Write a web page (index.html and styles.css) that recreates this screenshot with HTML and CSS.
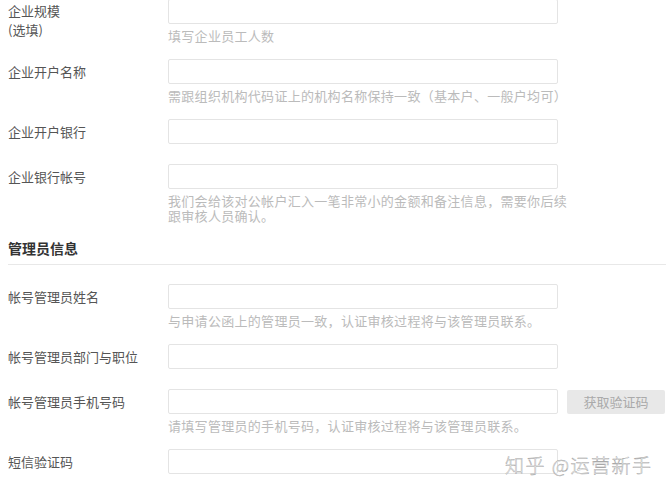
FILE: index.html
```html
<!DOCTYPE html>
<html lang="zh-CN">
<head>
  <meta charset="UTF-8">
  <meta name="viewport" content="width=device-width, initial-scale=1.0">
  <title>企业认证</title>
  <link rel="stylesheet" href="styles.css">
</head>
<body>
  <form class="form">
    <div class="row">
      <label class="label label-tall">企业规模<br>(选填)</label>
      <div class="field">
        <input class="input" type="text">
        <p class="hint">填写企业员工人数</p>
      </div>
    </div>

    <div class="row">
      <label class="label">企业开户名称</label>
      <div class="field">
        <input class="input" type="text">
        <p class="hint">需跟组织机构代码证上的机构名称保持一致（基本户、一般户均可）</p>
      </div>
    </div>

    <div class="row row-plain">
      <label class="label">企业开户银行</label>
      <div class="field">
        <input class="input" type="text">
      </div>
    </div>

    <div class="row row-last">
      <label class="label">企业银行帐号</label>
      <div class="field">
        <input class="input" type="text">
        <p class="hint">我们会给该对公帐户汇入一笔非常小的金额和备注信息，需要你后续跟审核人员确认。</p>
      </div>
    </div>

    <h3 class="section-title">管理员信息</h3>

    <div class="row">
      <label class="label">帐号管理员姓名</label>
      <div class="field">
        <input class="input" type="text">
        <p class="hint">与申请公函上的管理员一致，认证审核过程将与该管理员联系。</p>
      </div>
    </div>

    <div class="row row-plain">
      <label class="label">帐号管理员部门与职位</label>
      <div class="field">
        <input class="input" type="text">
      </div>
    </div>

    <div class="row">
      <label class="label">帐号管理员手机号码</label>
      <div class="field">
        <div class="input-group">
          <input class="input" type="text">
          <button class="code-btn" type="button">获取验证码</button>
        </div>
        <p class="hint">请填写管理员的手机号码，认证审核过程将与该管理员联系。</p>
      </div>
    </div>

    <div class="row">
      <label class="label">短信验证码</label>
      <div class="field">
        <input class="input" type="text">
      </div>
    </div>
  </form>

  <div class="watermark">知乎 @运营新手</div>
</body>
</html>
```

FILE: styles.css
```css
/* Page */
body {
  margin: 0 0 0 8px;
  font-family: "Noto Sans CJK SC", "Liberation Sans", sans-serif;
  background-color: #ffffff;
  color: #555;
  position: relative;
  height: 494px;
  overflow: hidden;
}

.form {
  margin-top: -1px;
}

/* Rows */
.row {
  display: flex;
  align-items: flex-start;
  margin-bottom: 16px;
}

.row-plain {
  margin-bottom: 20px;
}

.row-last {
  margin-bottom: 15px;
}

.label {
  width: 160px;
  flex-shrink: 0;
  padding-top: 4px;
  font-size: 13px;
  line-height: 17px;
  color: #555;
}

.label-tall {
  padding-top: 2px;
  line-height: 19px;
}

.field {
  width: 400px;
}

.input {
  display: block;
  box-sizing: border-box;
  width: 390px;
  height: 25px;
  margin: 0;
  border: 1px solid #e4e4e4;
  border-radius: 2px;
  background: #fff;
  outline: none;
}

.hint {
  margin: 4px 0 0 0;
  font-size: 13px;
  line-height: 15px;
  letter-spacing: 0.3px;
  color: #bbb;
}

/* Phone + button */
.input-group {
  display: flex;
  align-items: center;
  width: 500px;
}

.code-btn {
  margin-left: 9px;
  width: 98px;
  height: 24px;
  border: none;
  border-radius: 2px;
  background-color: #e8e8e8;
  color: #aaa;
  font-family: "Noto Sans CJK SC", sans-serif;
  font-size: 13px;
  padding: 0;
}

/* Section heading */
.section-title {
  margin: 0 0 19px 0;
  padding-bottom: 6px;
  font-size: 14px;
  line-height: 20px;
  font-weight: bold;
  color: #333;
  border-bottom: 1px solid #e8e8e8;
}

/* Watermark */
.watermark {
  position: absolute;
  left: 497px;
  top: 451px;
  font-size: 19px;
  font-weight: 300;
  letter-spacing: 1.5px;
  color: #fff;
  -webkit-text-stroke: 0.4px #999;
  white-space: nowrap;
}
```
